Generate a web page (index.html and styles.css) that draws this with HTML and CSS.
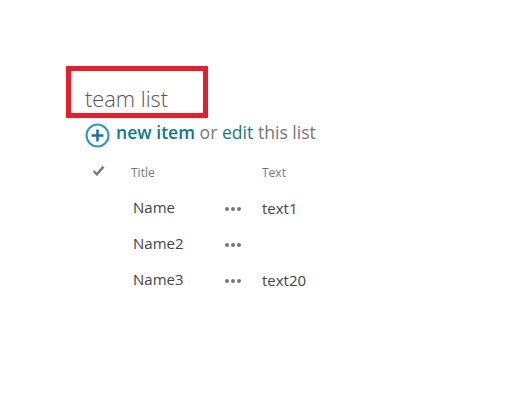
FILE: index.html
```html
<!DOCTYPE html>
<html lang="en">
<head>
<meta charset="utf-8">
<title>team list</title>
<link rel="stylesheet" href="styles.css">
</head>
<body>
<main class="page">
  <h1 class="title">team list</h1>
  <div class="actions">
    <svg class="add-icon" width="25" height="25" viewBox="0 0 26 26" aria-hidden="true">
      <circle cx="13" cy="13" r="11.4" fill="none" stroke="#2f96c9" stroke-width="2.2"/>
      <path d="M13 6.8v12.4M6.8 13h12.4" fill="none" stroke="#1f6fa8" stroke-width="2.6"/>
    </svg>
    <span class="action-text"><a class="new-item">new item</a> or <a class="edit">edit</a> this list</span>
  </div>
  <div class="list">
    <div class="row head">
      <span class="cell-check"><svg width="13" height="11" viewBox="0 0 12 11" aria-hidden="true"><path d="M1 6l3.4 3.4L11 1.6" fill="none" stroke="#7a7a7a" stroke-width="2.4"/></svg></span>
      <span class="cell-title">Title</span>
      <span class="cell-menu"></span>
      <span class="cell-text">Text</span>
    </div>
    <div class="row item">
      <span class="cell-check"></span>
      <span class="cell-title">Name</span>
      <span class="cell-menu"><i></i><i></i><i></i></span>
      <span class="cell-text">text1</span>
    </div>
    <div class="row item">
      <span class="cell-check"></span>
      <span class="cell-title">Name2</span>
      <span class="cell-menu"><i></i><i></i><i></i></span>
      <span class="cell-text"></span>
    </div>
    <div class="row item">
      <span class="cell-check"></span>
      <span class="cell-title">Name3</span>
      <span class="cell-menu"><i></i><i></i><i></i></span>
      <span class="cell-text">text20</span>
    </div>
  </div>
</main>
</body>
</html>
```
FILE: styles.css
```css
* { box-sizing: border-box; }
html, body { margin: 0; background: #fff; }
body {
  width: 511px;
  height: 404px;
  overflow: hidden;
  font-family: "Open Sans", "Noto Sans", sans-serif;
}
.page { padding: 66px 0 0 66px; }
.title {
  width: 142px;
  height: 52px;
  margin: 0;
  border: 5px solid #e81c2a;
  padding: 14px 0 0 14px;
  font-size: 21.8px;
  line-height: 27px;
  font-weight: 300;
  color: #555;
}
.actions {
  display: flex;
  align-items: center;
  gap: 6px;
  margin: 2px 0 0 19px;
  height: 26px;
}
.add-icon { margin-top: 4px; }
.action-text { margin-left: 0; margin-top: -2px; font-size: 17.6px; line-height: 26px; color: #777; white-space: nowrap; }
.new-item { color: #0f7a80; font-weight: 600; }
.edit { color: #1c7a80; }
.list { margin: 7px 0 0 0; }
.row { display: flex; align-items: center; }
.head { height: 36px; font-size: 12px; color: #777; }
.head .cell-title, .head .cell-text { padding-top: 2px; }
.item { height: 36px; font-size: 15px; color: #444; }
.cell-check { width: 65px; padding-left: 26px; display: flex; }
.head .cell-check { margin-top: -2px; }
.cell-title { width: 87px; }
.item .cell-title { padding-left: 2px; }
.cell-menu { width: 44px; padding-left: 7px; display: flex; gap: 2px; margin-top: 3px; }
.cell-menu i { width: 4px; height: 4px; border-radius: 50%; background: #777; }
.cell-text { flex: 1; }
.item .cell-text { padding-top: 2px; }
```
